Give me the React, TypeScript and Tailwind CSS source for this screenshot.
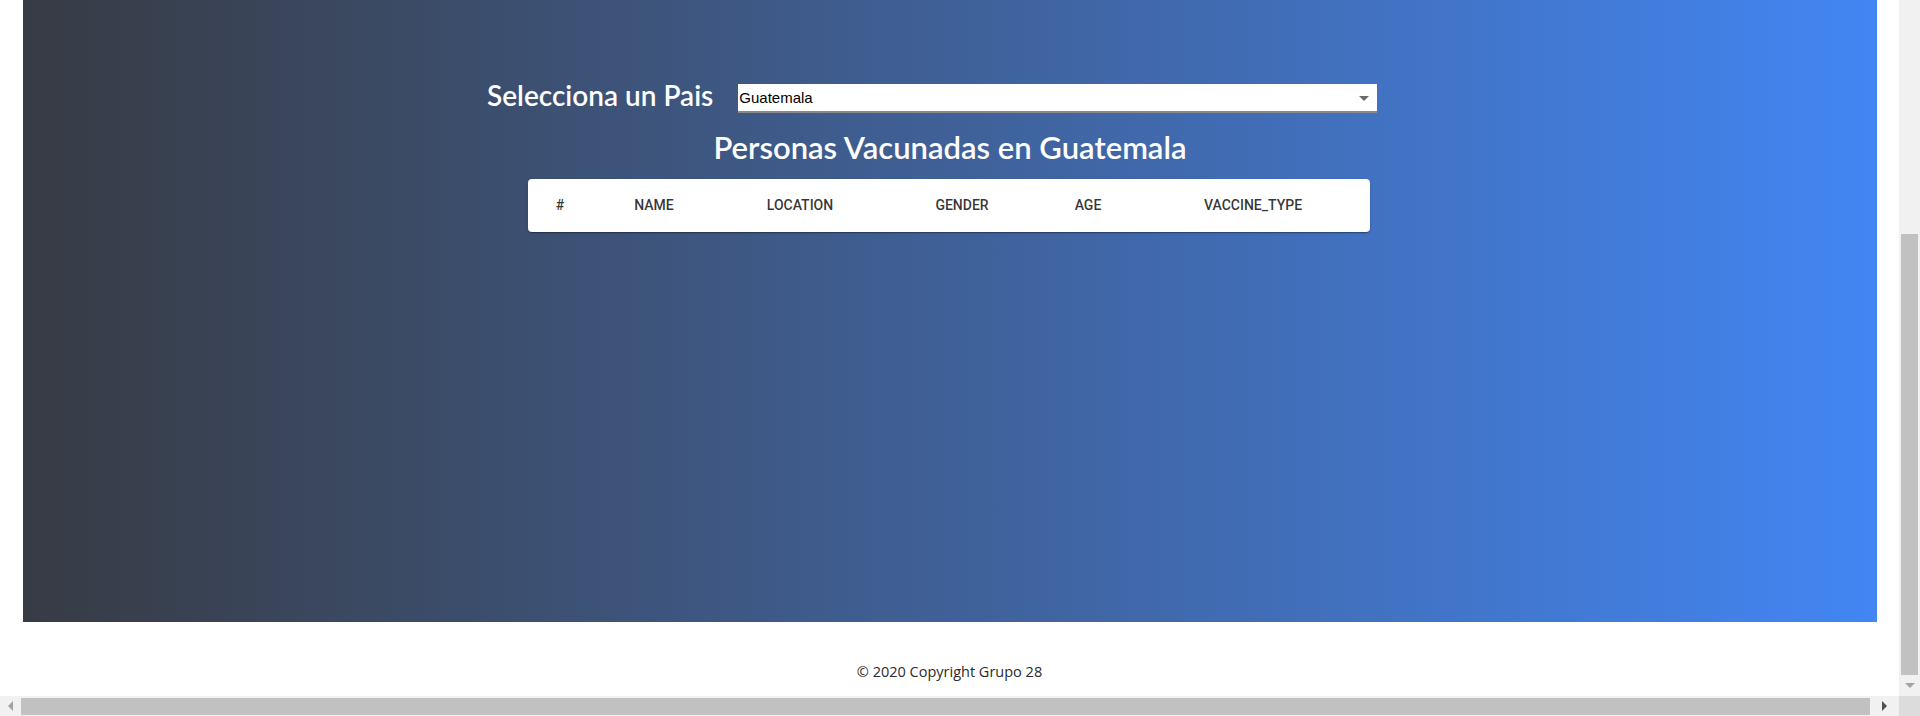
import React from 'react';

const columns = [
  { label: '#', width: 'w-[64px]' },
  { label: 'NAME', width: 'w-[124px]' },
  { label: 'LOCATION', width: 'w-[168px]' },
  { label: 'GENDER', width: 'w-[156px]' },
  { label: 'AGE', width: 'w-[96px]' },
  { label: 'VACCINE_TYPE', width: 'flex-1' },
];

function Arrow({ dir, color = '#a3a3a3' }: { dir: 'left' | 'right' | 'down'; color?: string }) {
  const points = {
    left: '6,0 6,10 1,5',
    right: '1,0 1,10 6,5',
    down: '0,1 10,1 5,6',
  }[dir];
  const size = dir === 'down' ? { w: 10, h: 7 } : { w: 7, h: 10 };
  return (
    <svg width={size.w} height={size.h} viewBox={`0 0 ${size.w} ${size.h}`}>
      <polygon points={points} fill={color} />
    </svg>
  );
}

export default function App() {
  return (
    <div className="w-[1920px] h-[716px] flex flex-col overflow-hidden bg-white">
      <div className="flex h-[696px]">
        <main className="flex-1 flex flex-col">
          {/* Gradient panel */}
          <section className="ml-[23px] w-[1854px] h-[622px] bg-gradient-to-r from-[#373b44] to-[#4286f4] flex flex-col">
            <div className="mt-[84px] ml-[464px] flex items-center h-[29px]">
              <h3
                className="mb-[8px] text-white text-[28px] leading-none font-semibold whitespace-nowrap"
                style={{ fontFamily: '"Comic Sans MS", Lato, "Open Sans", sans-serif' }}
              >
                Selecciona un Pais
              </h3>
              <div className="ml-[25px] w-[639px] h-[29px] bg-white border-b-[2px] border-[#8a8a8a] flex items-center justify-between pl-[1px] pr-[8px] pt-[1px]">
                <span className="text-[15px] text-black" style={{ fontFamily: 'Arial, "Liberation Sans", sans-serif' }}>
                  Guatemala
                </span>
                <Arrow dir="down" color="#6b6b6b" />
              </div>
            </div>

            <h2
              className="mt-[14px] text-center text-white text-[31px] leading-[40px] font-semibold"
              style={{ fontFamily: '"Comic Sans MS", Lato, "Open Sans", sans-serif' }}
            >
              Personas Vacunadas en Guatemala
            </h2>

            <div className="mt-[12px] ml-[505px] w-[842px] h-[53px] bg-white rounded-[4px] shadow-[0_2px_1px_-1px_rgba(0,0,0,0.2),0_1px_1px_0_rgba(0,0,0,0.14),0_1px_3px_0_rgba(0,0,0,0.12)] flex items-center">
              {columns.map((c) => (
                <div
                  key={c.label}
                  className={`${c.width} text-center text-[14px] font-medium text-black/[0.8]`}
                  style={{ fontFamily: 'Roboto, "Liberation Sans", sans-serif' }}
                >
                  {c.label}
                </div>
              ))}
            </div>
          </section>

          {/* Footer */}
          <footer className="flex-1 flex items-end justify-center pb-[13px]">
            <p className="text-[14.5px] text-[#2b2b2b]" style={{ fontFamily: '"Open Sans", "Noto Sans", sans-serif' }}>
              © 2020 Copyright Grupo 28
            </p>
          </footer>
        </main>

        {/* Vertical scrollbar */}
        <div className="w-[21px] bg-[#f1f1f1] flex flex-col items-center">
          <div className="h-[234px]" />
          <div className="w-[17px] flex-1 bg-[#c1c1c1]" />
          <div className="h-[21px] flex items-center justify-center">
            <Arrow dir="down" />
          </div>
        </div>
      </div>

      {/* Horizontal scrollbar */}
      <div className="h-[20px] flex bg-[#f1f1f1]">
        <div className="w-[21px] flex items-center justify-center">
          <Arrow dir="left" />
        </div>
        <div className="flex-1 flex items-center">
          <div className="h-[17px] w-full bg-[#c1c1c1]" />
        </div>
        <div className="w-[29px] flex items-center justify-center">
          <Arrow dir="right" color="#505050" />
        </div>
        <div className="w-[21px] bg-[#dcdcdc]" />
      </div>
    </div>
  );
}
